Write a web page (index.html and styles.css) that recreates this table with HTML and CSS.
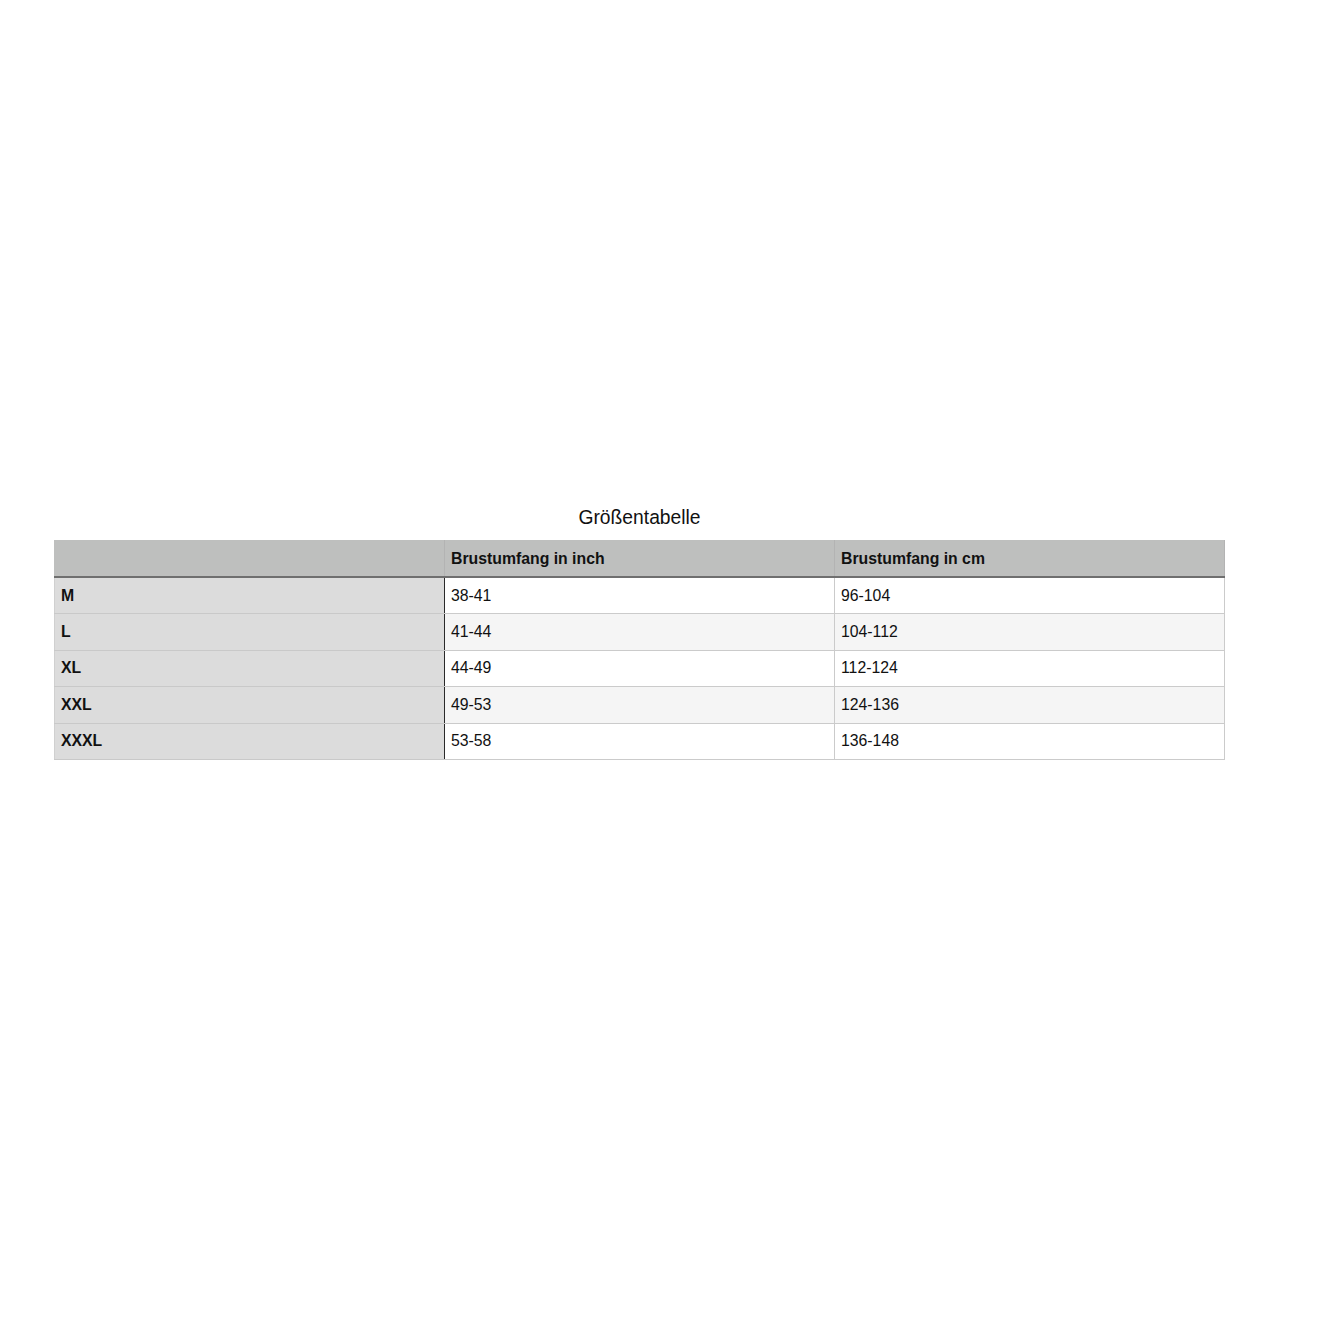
FILE: index.html
```html
<!DOCTYPE html>
<html lang="de">
<head>
<meta charset="utf-8">
<title>Größentabelle</title>
<link rel="stylesheet" href="styles.css">
</head>
<body>
<div class="page">
  <div class="chart">
    <div class="title">Größentabelle</div>
    <table class="sizes">
      <thead>
        <tr>
          <th class="corner"></th>
          <th>Brustumfang in inch</th>
          <th>Brustumfang in cm</th>
        </tr>
      </thead>
      <tbody>
        <tr><th class="size">M</th><td>38-41</td><td>96-104</td></tr>
        <tr><th class="size">L</th><td>41-44</td><td>104-112</td></tr>
        <tr><th class="size">XL</th><td>44-49</td><td>112-124</td></tr>
        <tr><th class="size">XXL</th><td>49-53</td><td>124-136</td></tr>
        <tr><th class="size">XXXL</th><td>53-58</td><td>136-148</td></tr>
      </tbody>
    </table>
  </div>
</div>
</body>
</html>
```
FILE: styles.css
```css
html, body {
  margin: 0;
  padding: 0;
  background: #ffffff;
}
body {
  font-family: "Liberation Sans", Arial, sans-serif;
  color: #111111;
}
.page {
  padding-top: 507px;
  padding-left: 54px;
}
.chart {
  width: 1171px;
}
.title {
  text-align: center;
  font-size: 19.3px;
  line-height: 22px;
  height: 22px;
  margin-bottom: 11px;
  color: #111;
}
.sizes {
  width: 1171px;
  border-collapse: collapse;
  table-layout: fixed;
  font-size: 15.8px;
}
.sizes th, .sizes td {
  text-align: left;
  padding: 0 0 0 6px;
  height: 35.4px;
  vertical-align: middle;
  border: 1px solid #cbcbcb;
}
.sizes thead th {
  background: #bebfbe;
  font-weight: bold;
  height: 35px;
  border-top: 1px solid #bebfbe;
  border-left: 1px solid #b3b3b3;
  border-right: 1px solid #b3b3b3;
  border-bottom: 2px solid #6f6f6f;
}
.sizes thead th.corner {
  border-left: 1px solid #bebfbe;
}
.sizes tbody th.size {
  background: #dcdcdc;
  font-weight: bold;
  border-color: #c9c9c9 #2a2a2a #c9c9c9 #d0d0d0;
}
.sizes tbody tr:nth-child(odd) td {
  background: #ffffff;
}
.sizes tbody tr:nth-child(even) td {
  background: #f5f5f5;
}
```
